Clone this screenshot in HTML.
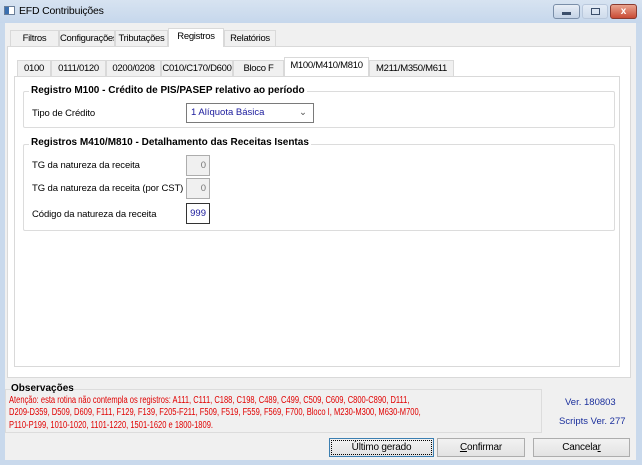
<!DOCTYPE html>
<html><head><meta charset="utf-8"><style>
*{margin:0;padding:0;box-sizing:border-box}
body{width:642px;height:465px;overflow:hidden;font-family:"Liberation Sans",sans-serif;font-size:10px;color:#000;background:#c9d9ec;position:relative}
.a{position:absolute;white-space:nowrap}
.client{left:5px;top:23px;width:631px;height:437px;background:#f0f0f0}
.tab{position:absolute;height:16px;border:1px solid #d9d9d9;border-bottom:none;background:#f0f0f0;text-align:center;line-height:15px;font-size:9.5px;letter-spacing:-0.3px;white-space:nowrap;overflow:hidden}
.tab.sel{background:#fff;height:19px;line-height:16px;z-index:2}
.panel{position:absolute;background:#fff;border:1px solid #d9d9d9}
.grp{position:absolute;border:1px solid #dcdcdc;border-radius:2px}
.gt{position:absolute;background:#fff;font-weight:bold;padding:0 2px;font-size:10px;letter-spacing:0px;white-space:nowrap}
.lbl{font-size:9.5px;letter-spacing:-0.1px}
.inp{position:absolute;border:1px solid #adadad;height:21px;text-align:right;padding-right:3px;line-height:19px;font-size:9.5px}
.btn{position:absolute;height:19px;border:1px solid #adadad;background:linear-gradient(#f2f2f2,#e3e3e3);text-align:center;line-height:17px;font-size:10px;letter-spacing:-0.2px}
</style></head><body>
<div class="a" style="left:0;top:0;width:642px;height:23px;background:linear-gradient(#d7e3f1,#c6d7ec)"></div>
<div class="a" style="left:4px;top:6px;width:11px;height:9px;background:#fff;border:1px solid #6b7f99"><div style="width:4px;height:7px;background:#3a6fb0"></div></div>
<div class="a" style="left:19px;top:5px;font-size:10.5px;letter-spacing:-0.2px">EFD Contribuições</div>
<div class="a" style="left:553px;top:4px;width:27px;height:15px;border:1px solid #7a8ea8;border-radius:3px;background:linear-gradient(#e8eef6,#c3d2e6)"><div style="margin:7px auto 0;width:9px;height:3px;background:#3c4f6b"></div></div>
<div class="a" style="left:582px;top:4px;width:26px;height:15px;border:1px solid #b9c8dc;border-radius:3px;background:linear-gradient(#e4ecf6,#cfdcec)"><div style="margin:3px auto 0;width:9px;height:7px;border:1px solid #3c4f6b"></div></div>
<div class="a" style="left:610px;top:4px;width:27px;height:15px;border:1px solid #8a3b30;border-radius:3px;background:linear-gradient(#e9a48f,#c94b35);color:#fff;text-align:center;font-weight:bold;line-height:13px">x</div>
<div class="a client"></div>
<div class="tab" style="left:10px;top:30px;width:49px">Filtros</div>
<div class="tab" style="left:59px;top:30px;width:56px">Configurações</div>
<div class="tab" style="left:115px;top:30px;width:53px">Tributações</div>
<div class="tab sel" style="left:168px;top:28px;width:56px">Registros</div>
<div class="tab" style="left:224px;top:30px;width:52px">Relatórios</div>
<div class="panel" style="left:7px;top:46px;width:624px;height:332px"></div>
<div class="tab" style="left:17px;top:60px;width:34px">0100</div>
<div class="tab" style="left:51px;top:60px;width:55px">0111/0120</div>
<div class="tab" style="left:106px;top:60px;width:55px">0200/0208</div>
<div class="tab" style="left:161px;top:60px;width:72px">C010/C170/D600</div>
<div class="tab" style="left:233px;top:60px;width:51px">Bloco F</div>
<div class="tab sel" style="left:284px;top:57px;width:85px">M100/M410/M810</div>
<div class="tab" style="left:369px;top:60px;width:85px">M211/M350/M611</div>
<div class="panel" style="left:14px;top:76px;width:606px;height:291px"></div>
<div class="grp" style="left:23px;top:91px;width:592px;height:37px"></div>
<div class="gt" style="left:29px;top:85px">Registro M100 - Crédito de PIS/PASEP relativo ao período</div>
<div class="a lbl" style="left:32px;top:108px">Tipo de Crédito</div>
<div class="a" style="left:186px;top:103px;width:128px;height:20px;border:1px solid #7a7a7a;padding-left:4px;line-height:18px;color:#1a1a9c;font-size:9.5px">1 Alíquota Básica<span style="position:absolute;right:6px;top:0;color:#555">⌄</span></div>
<div class="grp" style="left:23px;top:144px;width:592px;height:87px"></div>
<div class="gt" style="left:29px;top:137px">Registros M410/M810 - Detalhamento das Receitas Isentas</div>
<div class="a lbl" style="left:32px;top:160px">TG da natureza da receita</div>
<div class="inp" style="left:186px;top:155px;width:24px;background:#f0f0f0;color:#777">0</div>
<div class="a lbl" style="left:32px;top:183px">TG da natureza da receita (por CST)</div>
<div class="inp" style="left:186px;top:178px;width:24px;background:#f0f0f0;color:#777">0</div>
<div class="a lbl" style="left:32px;top:209px">Código da natureza da receita</div>
<div class="inp" style="left:186px;top:203px;width:24px;background:#fff;color:#1a1a9c;border-color:#333">999</div>
<div class="a" style="left:5px;top:389px;width:537px;height:44px;border:1px solid #dcdcdc"></div>
<div class="a" style="left:11px;top:383px;font-weight:bold;font-size:10px;background:#f0f0f0">Observações</div>
<div class="a" style="left:9px;top:395px;color:#e00000;font-size:9.8px;line-height:12.3px;transform:scaleX(0.77);transform-origin:0 0">Atenção: esta rotina não contempla os registros: A111, C111, C188, C198, C489, C499, C509, C609, C800-C890, D111,<br>D209-D359, D509, D609, F111, F129, F139, F205-F211, F509, F519, F559, F569, F700, Bloco I, M230-M300, M630-M700,<br>P110-P199, 1010-1020, 1101-1220, 1501-1620 e 1800-1809.</div>
<div class="a" style="left:565px;top:397px;color:#1a2f9c;font-size:9.5px">Ver. 180803</div>
<div class="a" style="left:559px;top:416px;color:#1a2f9c;font-size:9.5px">Scripts Ver. 277</div>
<div class="btn" style="left:329px;top:438px;width:105px;border:1px solid #3c7fb1;outline:1px dotted #000;outline-offset:-3px">Último gerado</div>
<div class="btn" style="left:437px;top:438px;width:88px"><u>C</u>onfirmar</div>
<div class="btn" style="left:533px;top:438px;width:97px">Cancela<u>r</u></div>
</body></html>
